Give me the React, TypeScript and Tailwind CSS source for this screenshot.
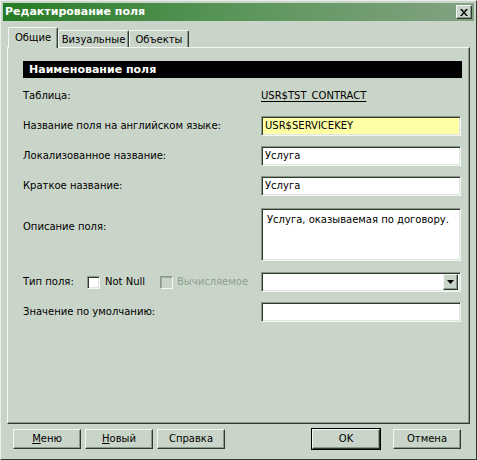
const raised =
  "border border-t-[#f4f7f4] border-l-[#f4f7f4] border-r-[#2f3a2f] border-b-[#2f3a2f] shadow-[inset_-1px_-1px_0_#8a998a]";
const sunken =
  "border border-t-[#8a998a] border-l-[#8a998a] border-r-[#f4f7f4] border-b-[#f4f7f4] shadow-[inset_1px_1px_0_#2f3a2f,inset_-1px_-1px_0_#dfe6df]";

function Field({ value, yellow }: { value?: string; yellow?: boolean }) {
  return (
    <div
      className={`w-[200px] h-[20px] flex items-center pl-[3px] ${sunken} ${
        yellow ? "bg-[#ffffa6]" : "bg-white"
      }`}
    >
      {value}
    </div>
  );
}

function Check({ disabled }: { disabled?: boolean }) {
  return (
    <div
      className={`w-[13px] h-[13px] shrink-0 ${
        disabled
          ? "border border-t-[#8a998a] border-l-[#8a998a] border-r-[#f4f7f4] border-b-[#f4f7f4] bg-[#cad5c9] shadow-[inset_1px_1px_0_#9aa99a]"
          : `${sunken} bg-white`
      }`}
    />
  );
}

function Button({ children, def }: { children: React.ReactNode; def?: boolean }) {
  return (
    <div
      className={`w-[68px] h-[20px] flex items-center justify-center ${
        def ? "outline outline-1 outline-black" : ""
      } ${raised}`}
    >
      {children}
    </div>
  );
}

export default function App() {
  return (
    <div className="w-[477px] h-[460px] bg-[#cad5c9] border border-t-[#e9eee9] border-l-[#e9eee9] border-r-[#2f3a2f] border-b-[#2f3a2f] p-[2px] flex flex-col text-black text-[10px] leading-[12px] font-['DejaVu_Sans',sans-serif]">
      {/* title bar */}
      <div className="h-[18px] flex items-center justify-between pl-[2px] pr-[2px] bg-linear-to-r from-[#237c23] via-[#5a965a] to-[#83a283]">
        <span className="text-white font-bold text-[11px]">Редактирование поля</span>
        <div className={`w-[16px] h-[14px] bg-[#cad5c9] flex items-center justify-center ${raised}`}>
          <svg width="8" height="7" viewBox="0 0 8 7">
            <path d="M0 0h2l2 2.5L6 0h2L5 3.5 8 7H6L4 4.5 2 7H0l3-3.5z" fill="#000" />
          </svg>
        </div>
      </div>

      {/* tabs */}
      <div className="flex items-end pl-[5px] mt-[6px] relative z-10">
        <div className="w-[50px] h-[21px] -mb-[1px] bg-[#cad5c9] border-t border-l border-r border-t-[#f4f7f4] border-l-[#f4f7f4] border-r-[#2f3a2f] rounded-t-[2px] shadow-[inset_-1px_0_0_#8a998a] flex items-start justify-center pt-[4px]">
          Общие
        </div>
        <div className="w-[71px] h-[17px] border-t border-l border-r border-t-[#f4f7f4] border-l-[#f4f7f4] border-r-[#2f3a2f] rounded-t-[2px] shadow-[inset_-1px_0_0_#8a998a] flex items-start justify-center pt-[3px]">
          Визуальные
        </div>
        <div className="w-[60px] h-[17px] border-t border-l border-r border-t-[#f4f7f4] border-l-[#f4f7f4] border-r-[#2f3a2f] rounded-t-[2px] shadow-[inset_-1px_0_0_#8a998a] flex items-start justify-center pt-[3px]">
          Объекты
        </div>
      </div>

      {/* panel */}
      <div className={`mx-[4px] h-[377px] pl-[15px] pr-[7px] pt-[13px] flex flex-col ${raised}`}>
        <div className="h-[17px] bg-black text-white font-bold text-[11px] flex items-center pl-[6px]">
          Наименование поля
        </div>

        <div className="mt-[8px] h-[20px] flex items-center">
          <span className="w-[238px]">Таблица:</span>
          <span className="underline underline-offset-[2px]">USR$TST_CONTRACT</span>
        </div>
        <div className="mt-[10px] h-[20px] flex items-center">
          <span className="w-[238px]">Название поля на английском языке:</span>
          <Field value="USR$SERVICEKEY" yellow />
        </div>
        <div className="mt-[10px] h-[20px] flex items-center">
          <span className="w-[238px]">Локализованное название:</span>
          <Field value="Услуга" />
        </div>
        <div className="mt-[10px] h-[20px] flex items-center">
          <span className="w-[238px]">Краткое название:</span>
          <Field value="Услуга" />
        </div>
        <div className="mt-[12px] h-[53px] flex items-start">
          <span className="w-[238px] mt-[13px]">Описание поля:</span>
          <div className={`w-[200px] h-[53px] bg-white pl-[5px] pt-[5px] ${sunken}`}>
            Услуга, оказываемая по договору.
          </div>
        </div>
        <div className="mt-[11px] h-[20px] flex items-center">
          <div className="w-[238px] flex items-center">
            <span className="w-[64px]">Тип поля:</span>
            <Check />
            <span className="ml-[5px] w-[55px]">Not Null</span>
            <Check disabled />
            <span className="ml-[4px] text-[#8c9f8c]">Вычисляемое</span>
          </div>
          <div className={`w-[200px] h-[20px] bg-white flex justify-end items-center pr-[2px] ${sunken}`}>
            <div className={`w-[15px] h-[16px] bg-[#cad5c9] flex items-center justify-center ${raised}`}>
              <svg width="7" height="4" viewBox="0 0 7 4">
                <path d="M0 0h7L3.5 4z" fill="#000" />
              </svg>
            </div>
          </div>
        </div>
        <div className="mt-[10px] h-[20px] flex items-center">
          <span className="w-[238px]">Значение по умолчанию:</span>
          <Field />
        </div>
      </div>

      {/* buttons */}
      <div className="mt-[5px] pl-[10px] pr-[13px] flex items-center">
        <div className="flex gap-[4px]">
          <Button>
            <span><u>М</u>еню</span>
          </Button>
          <Button>
            <span><u>Н</u>овый</span>
          </Button>
          <Button>Справка</Button>
        </div>
        <div className="ml-auto flex gap-[13px]">
          <Button def>OK</Button>
          <Button>Отмена</Button>
        </div>
      </div>
    </div>
  );
}
